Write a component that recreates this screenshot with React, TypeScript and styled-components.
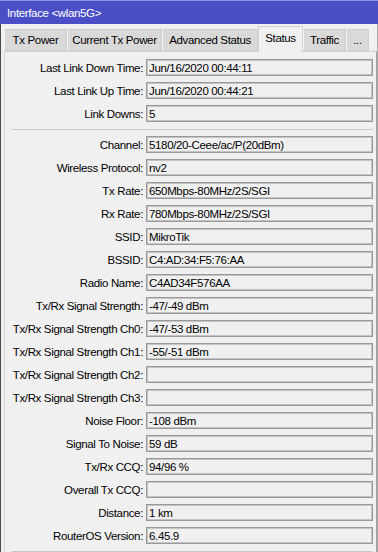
import React from 'react'
import styled, { createGlobalStyle } from 'styled-components'

const GlobalStyle = createGlobalStyle`
  html, body {
    margin: 0;
    padding: 0;
    background: #f0f0f0;
  }
  * {
    box-sizing: border-box;
  }
`

const Window = styled.div`
  width: 378px;
  height: 552px;
  overflow: hidden;
  display: flex;
  flex-direction: column;
  background: #f0f0f0;
  font-family: "Liberation Sans", Arial, sans-serif;
  font-size: 11.5px;
  letter-spacing: -0.35px;
  color: #000;
`

const TitleBar = styled.div`
  height: 24px;
  flex: none;
  display: flex;
  align-items: center;
  padding-left: 7px;
  padding-top: 1px;
  background: #4b4fc7;
  border-top: 1px solid #8e91e0;
  color: #fff;
`

const Body = styled.div`
  flex: 1;
  display: flex;
  flex-direction: column;
  border-left: 1px solid #4a4a4a;
  border-right: 1px solid #a9a9a9;
  min-height: 0;
`

const TabStrip = styled.div`
  height: 27px;
  flex: none;
  display: flex;
  align-items: flex-end;
  padding-left: 3px;
`

const Tab = styled.div<{ $w: number; $active?: boolean }>`
  width: ${p => p.$w}px;
  height: ${p => (p.$active ? 26 : 22)}px;
  margin-bottom: ${p => (p.$active ? -1 : 0)}px;
  position: relative;
  z-index: ${p => (p.$active ? 2 : 1)};
  display: flex;
  align-items: center;
  justify-content: center;
  padding-bottom: ${p => (p.$active ? 3 : 0)}px;
  background: ${p => (p.$active ? '#f0f0f0' : '#d9d9d9')};
  border: 1px solid ${p => (p.$active ? '#d2d2d2' : '#cfcfcf')};
  border-bottom: ${p => (p.$active ? 'none' : '1px solid #cfcfcf')};
  border-left-color: ${p => (p.$active ? '#d2d2d2' : '#f4f4f4')};
  white-space: nowrap;
`

const Panel = styled.div`
  flex: 1;
  margin-left: 3px;
  border: 1px solid #d4d4d4;
  border-right-color: #a0a0a0;
  border-bottom: none;
  padding: 4px 3px 0 0;
  overflow: hidden;
`

const Row = styled.div`
  height: 23px;
  display: grid;
  grid-template-columns: 1fr 227px;
  column-gap: 3px;
  align-items: center;
`

const Label = styled.div`
  text-align: right;
  white-space: nowrap;
`

const Field = styled.div`
  height: 17px;
  display: flex;
  align-items: center;
  padding: 0 0 0 2px;
  border: 1px solid #999;
  box-shadow: inset 0 0 0 1px #c4c4c4;
  background: #f0f0f0;
  white-space: nowrap;
`

const Separator = styled.div`
  height: 8px;
  margin-left: 7px;
  display: flex;
  align-items: center;
  &::after {
    content: '';
    flex: 1;
    height: 1px;
    background: #c9c9c9;
  }
`

const tabs = [
  { name: 'Tx Power', w: 63 },
  { name: 'Current Tx Power', w: 95 },
  { name: 'Advanced Status', w: 96 },
  { name: 'Status', w: 45, active: true },
  { name: 'Traffic', w: 43 },
  { name: '...', w: 23 },
]

const linkRows: [string, string][] = [
  ['Last Link Down Time:', 'Jun/16/2020 00:44:11'],
  ['Last Link Up Time:', 'Jun/16/2020 00:44:21'],
  ['Link Downs:', '5'],
]

const statusRows: [string, string][] = [
  ['Channel:', '5180/20-Ceee/ac/P(20dBm)'],
  ['Wireless Protocol:', 'nv2'],
  ['Tx Rate:', '650Mbps-80MHz/2S/SGI'],
  ['Rx Rate:', '780Mbps-80MHz/2S/SGI'],
  ['SSID:', 'MikroTik'],
  ['BSSID:', 'C4:AD:34:F5:76:AA'],
  ['Radio Name:', 'C4AD34F576AA'],
  ['Tx/Rx Signal Strength:', '-47/-49 dBm'],
  ['Tx/Rx Signal Strength Ch0:', '-47/-53 dBm'],
  ['Tx/Rx Signal Strength Ch1:', '-55/-51 dBm'],
  ['Tx/Rx Signal Strength Ch2:', ''],
  ['Tx/Rx Signal Strength Ch3:', ''],
  ['Noise Floor:', '-108 dBm'],
  ['Signal To Noise:', '59 dB'],
  ['Tx/Rx CCQ:', '94/96 %'],
  ['Overall Tx CCQ:', ''],
  ['Distance:', '1 km'],
  ['RouterOS Version:', '6.45.9'],
]

function StatusRow({ label, value }: { label: string; value: string }) {
  return (
    <Row>
      <Label>{label}</Label>
      <Field>{value}</Field>
    </Row>
  )
}

export default function App() {
  return (
    <>
      <GlobalStyle />
      <Window>
        <TitleBar>Interface &lt;wlan5G&gt;</TitleBar>
        <Body>
          <TabStrip>
            {tabs.map(t => (
              <Tab key={t.name} $w={t.w} $active={t.active}>
                {t.name}
              </Tab>
            ))}
          </TabStrip>
          <Panel>
            {linkRows.map(([l, v]) => (
              <StatusRow key={l} label={l} value={v} />
            ))}
            <Separator />
            {statusRows.map(([l, v]) => (
              <StatusRow key={l} label={l} value={v} />
            ))}
            <Separator />
          </Panel>
        </Body>
      </Window>
    </>
  )
}
